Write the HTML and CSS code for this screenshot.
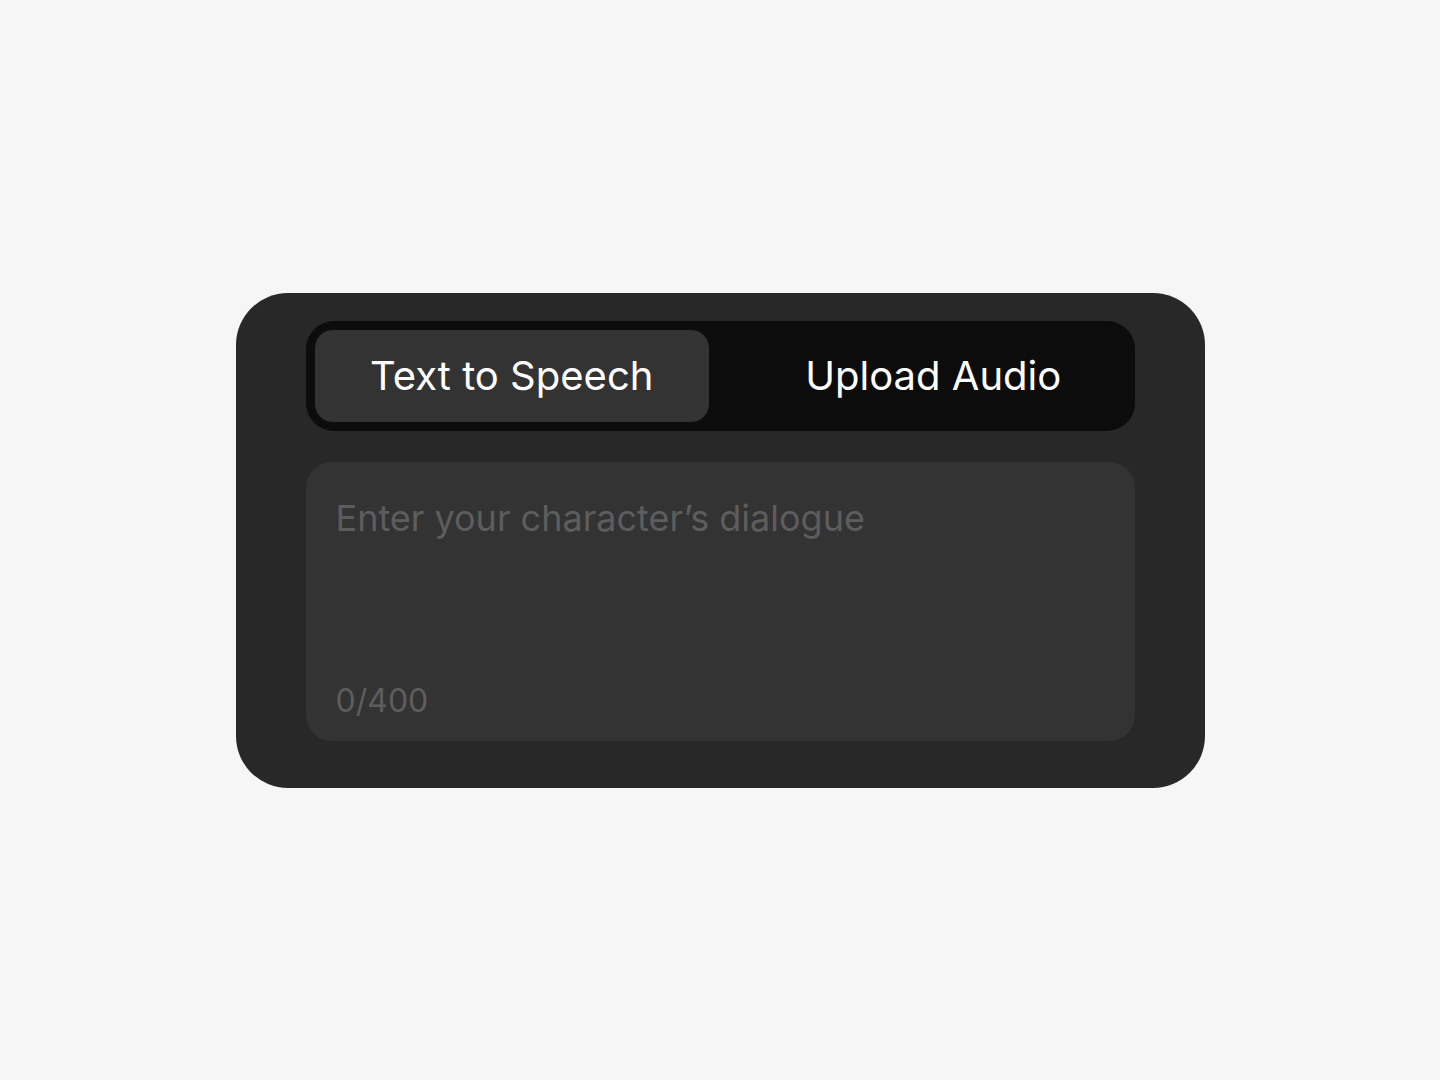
FILE: index.html
```html
<!DOCTYPE html>
<html lang="en">

<head>
  <meta charset="UTF-8" />
  <meta name="viewport" content="width=device-width, initial-scale=1.0" />
  <title>Voice Input</title>
  <link rel="stylesheet" href="styles.css">
</head>

<body>
  <div class="page">
    <section class="card">
      <div class="tabs">
        <button class="tab active">Text to Speech</button>
        <button class="tab">Upload Audio</button>
      </div>

      <div class="dialogue">
        <span class="placeholder">Enter your character’s dialogue</span>
        <span class="counter">0/400</span>
      </div>
    </section>
  </div>
</body>

</html>
```

FILE: styles.css
```css
body {
  margin: 0;
  font-family: Inter, "Noto Sans", Arial, sans-serif;
  background: #f6f6f6;
  color: #ffffff;
}

.page {
  height: 1080px;
  display: flex;
  align-items: center;
  justify-content: center;
}

.card {
  width: 969px;
  box-sizing: border-box;
  background: #282828;
  border-radius: 52px;
  padding: 28px 70px 47px;
  display: flex;
  flex-direction: column;
  gap: 31px;
}

.tabs {
  display: flex;
  gap: 22px;
  height: 110px;
  box-sizing: border-box;
  padding: 9px;
  background: #0c0c0c;
  border-radius: 28px;
}

.tab {
  flex: 1 1 0;
  border: none;
  background: transparent;
  color: #ffffff;
  font-family: inherit;
  font-size: 40px;
  font-weight: 400;
  border-radius: 18px;
  padding: 0;
  cursor: pointer;
}

.tab + .tab {
  text-indent: 10px;
}

.tab.active {
  background: #333333;
}

.dialogue {
  height: 279px;
  box-sizing: border-box;
  background: #333333;
  border-radius: 26px;
  padding: 35px 30px 20px;
  display: flex;
  flex-direction: column;
  justify-content: space-between;
  color: #5d5d5d;
}

.placeholder {
  font-size: 36px;
  line-height: 1.2;
}

.counter {
  font-size: 32px;
  line-height: 1.2;
}
```
